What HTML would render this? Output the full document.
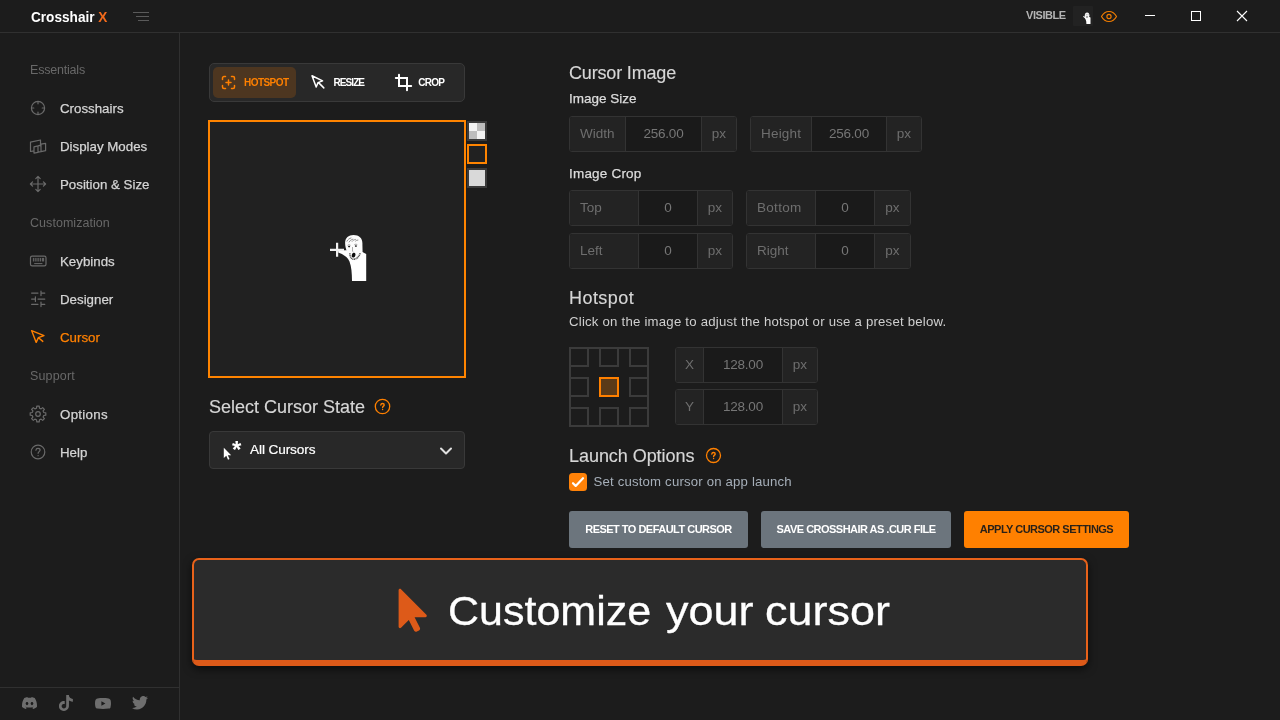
<!DOCTYPE html>
<html lang="en">
<head>
<meta charset="utf-8">
<title>Crosshair X</title>
<style>
*{box-sizing:border-box;margin:0;padding:0}
html,body{width:1280px;height:720px;overflow:hidden;background:#1c1c1c}
body{font-family:"Liberation Sans",sans-serif;color:#d0d0d0;position:relative}
#root{position:absolute;left:0;top:0;width:1280px;height:720px;will-change:transform}
.abs{position:absolute}
.t{position:absolute;white-space:nowrap;line-height:1}
/* title bar */
#titlebar{left:0;top:0;width:1280px;height:33px;border-bottom:1px solid #303030}
#brand{left:31px;top:8.500px;font-size:15.500px;font-weight:700;color:#fff;transform-origin:0 50%;transform:scaleX(.878)}
#brand b{color:#f26a1b}
.hb{position:absolute;height:1px;background:#5a5a5a}
/* sidebar */
#sidebar{left:0;top:33px;width:180px;height:687px;border-right:1px solid #303030}
.sec{left:30px;font-size:12.500px;color:#686868;letter-spacing:-0.200px}
.nav{left:60px;font-size:13.300px;color:#d4d4d4;-webkit-text-stroke:0.250px #d4d4d4;margin-top:1px}
.nav.on{color:#ff8000;-webkit-text-stroke-color:#ff8000}
.ico{position:absolute;left:29px;width:18px;height:18px;fill:none;stroke:#6a6a6a;stroke-width:1.200;stroke-linecap:round;stroke-linejoin:round}
#social{left:0;top:687px;width:179px;height:33px;border-top:1px solid #303030}
/* tabs */
#tabs{left:209px;top:63px;width:256px;height:39px;background:#282828;border:1px solid #393939;border-radius:5px}
#tabon{left:213px;top:67px;width:83px;height:31px;background:#4d3620;border-radius:5px}
.tab{font-size:10px;font-weight:700;color:#fff;letter-spacing:-0.3px}
/* preview */
#preview{left:208px;top:120px;width:258px;height:258px;border:2px solid #ff8400;background:#212121}
.sw{position:absolute;left:468px;width:19px;height:19px;border:1px solid #3a3a3a}
/* headings */
.h1{font-size:19px;color:#d6d6d6;-webkit-text-stroke:0.150px #d6d6d6}
.h2{font-size:13.500px;color:#dcdcdc;-webkit-text-stroke:0.250px #dcdcdc}
/* input groups */
.ig{position:absolute;height:36px;border:1px solid #333;border-radius:3px;background:#1a1a1a;display:flex;overflow:hidden}
.ig span{display:block;height:100%;line-height:34px;font-size:13.500px;color:#6e6e6e;white-space:nowrap}
.ig .l{background:#232323;border-right:1px solid #333;padding-left:10px}
.ig .v{text-align:center;color:#767676}
.ig .u{background:#232323;border-left:1px solid #333;text-align:center}
/* buttons */
.btn{position:absolute;top:511px;height:37px;border-radius:3px;font-size:11px;font-weight:700;line-height:37px;text-align:center;color:#fff;background:#6c757d;white-space:nowrap;letter-spacing:-0.520px}
/* banner */
#banner{left:192px;top:558px;width:896px;height:108px;background:#2b2b2b;border:2px solid #e8621a;border-bottom:6px solid #dd5a19;border-radius:7px;box-shadow:0 3px 8px rgba(0,0,0,.6)}
.bt{top:590.500px;font-size:41px;color:#fff;transform-origin:0 50%;-webkit-text-stroke:0.300px #fff}
#grid i{position:absolute;display:block;width:20px;height:20px;border:2px solid #3b3b3b}
#grid i.c{border:2px solid #ff8000;background:#5a3a18}
</style>
</head>
<body>
<div id="root">
<!-- TITLE BAR -->
<div id="titlebar" class="abs"></div>
<div id="brand" class="t">Crosshair <b>X</b></div>
<div class="hb" style="left:133px;top:12px;width:16px"></div>
<div class="hb" style="left:136px;top:16px;width:13px"></div>
<div class="hb" style="left:138px;top:20px;width:11px"></div>

<!-- top right -->
<div class="t" style="left:1026px;top:10px;font-size:11px;font-weight:700;color:#b4b4b4;letter-spacing:-0.450px">VISIBLE</div>
<div class="abs" style="left:1073px;top:6px;width:20px;height:20px;background:#222;border-radius:1px"></div>
<svg class="abs" style="left:1073px;top:6px" width="20" height="20" viewBox="0 0 20 20"><path d="M10 10.200l2.400.4 4 .4 1.100.6V18H13.400c0-3.400-.6-5.600-3.400-7.200z" fill="#fff"/><ellipse cx="14.100" cy="9.300" rx="2.300" ry="2.900" fill="#f6f6f6"/><ellipse cx="14" cy="10.900" rx=".7" ry=".9" fill="#555"/><path d="M12.900 8.700h.8M14.600 8.600h.8" stroke="#777" stroke-width=".6"/></svg>
<svg class="abs" style="left:1100px;top:8.500px" width="18" height="15" viewBox="0 0 18 15" fill="none" stroke="#f07c00" stroke-width="1.150" stroke-linejoin="round"><path d="M1.500 7.500c1.800-3.300 4.400-5 7.500-5s5.700 1.700 7.500 5c-1.800 3.300-4.400 5-7.500 5s-5.700-1.700-7.500-5z"/><circle cx="9" cy="7.500" r="2.100"/></svg>
<div class="abs" style="left:1145px;top:15px;width:10px;height:1px;background:#fff"></div>
<div class="abs" style="left:1191px;top:11px;width:10px;height:10px;border:1px solid #fff"></div>
<svg class="abs" style="left:1236px;top:10px" width="12" height="12" viewBox="0 0 12 12" stroke="#fff" stroke-width="1.100"><path d="M1 1l10 10M11 1 1 11"/></svg>

<!-- SIDEBAR -->
<div id="sidebar" class="abs"></div>
<div class="t sec" style="top:64px">Essentials</div>
<div class="t nav" style="top:101px">Crosshairs</div>
<div class="t nav" style="top:139px">Display Modes</div>
<div class="t nav" style="top:177px">Position &amp; Size</div>
<div class="t sec" style="top:217px;letter-spacing:0.050px">Customization</div>
<div class="t nav" style="top:254px">Keybinds</div>
<div class="t nav" style="top:292px">Designer</div>
<div class="t nav on" style="top:330px">Cursor</div>
<div class="t sec" style="top:370px;letter-spacing:0.150px">Support</div>
<div class="t nav" style="top:407px;letter-spacing:0.300px">Options</div>
<div class="t nav" style="top:445px">Help</div>
<!-- sidebar icons -->
<svg class="ico" style="top:99px" viewBox="0 0 18 18"><circle cx="9" cy="9" r="6.6"/><path d="M9 2.6v2.2M9 13.2v2.2M2.6 9h2.2M13.2 9h2.2"/></svg>
<svg class="ico" style="top:137px" viewBox="0 0 18 18"><path d="M1.5 5.2 11.5 3v6M1.5 5.2v9.3l3.5-.6M5 9.8l4-.9v6.4l-4 .8zM9 8.9l3-.7M9 15.2l3-.6M12 7.2l4.6-.9v7.4l-4.6.9z"/></svg>
<svg class="ico" style="top:175px" viewBox="0 0 18 18"><path d="M9 1.4v15.2M1.4 9h15.2M6.8 3.6 9 1.4l2.2 2.2M6.8 14.4 9 16.6l2.2-2.2M3.6 6.8 1.4 9l2.2 2.2M14.4 6.8 16.6 9l-2.200 2.2"/></svg>
<svg class="ico" style="top:252px" viewBox="0 0 18 18"><rect x="1.500" y="4.200" width="15.500" height="9.600" rx="1.600"/><path d="M4.400 6.300v2.800M6.200 6.300v2.800M8 6.300v2.800M9.800 6.300v2.800M11.600 6.300v2.800M13.400 6.300v2.800M14.600 6.300v2.800M5.600 11.600h7.400" stroke-width="1"/></svg>
<svg class="ico" style="top:290px" viewBox="0 0 18 18"><path d="M2.600 3.100h6.400M12 1v4.600M12 3.100h3.800M2.600 9.100h3.800M6.400 6.800v4.600M9 9.100h6.800M2.600 14.300h6.400M12 12v4.600M12 14.300h3.800"/></svg>
<svg class="ico" style="top:328px;stroke:#ff8000;stroke-width:1.400" viewBox="0 0 18 18"><path d="M2.600 2.600 7.200 14.400 9.400 9.600 15 7.600zM9.800 10l4 3.400"/></svg>
<svg class="ico" style="top:405px" viewBox="0 0 18 18"><circle cx="9" cy="9" r="2.300"/><path d="M7.5 3.2 7.8 1.2 10.2 1.2 10.5 3.2 12.1 3.9 13.7 2.6 15.4 4.3 14.1 5.9 14.8 7.5 16.8 7.8 16.8 10.2 14.8 10.5 14.1 12.1 15.4 13.7 13.7 15.4 12.1 14.1 10.5 14.8 10.2 16.8 7.8 16.8 7.5 14.8 5.9 14.1 4.3 15.4 2.6 13.7 3.9 12.1 3.2 10.5 1.2 10.2 1.2 7.8 3.2 7.5 3.9 5.9 2.6 4.3 4.3 2.6 5.9 3.9z"/></svg>
<svg class="ico" style="top:443px" viewBox="0 0 18 18"><circle cx="9" cy="9" r="6.800"/><path d="M6.900 7.200c.1-1.200 1-1.900 2.100-1.900 1.200 0 2.100.8 2.100 1.800 0 1.500-2 1.600-2 3.200M9.100 12.500v.2"/></svg>
<div id="social" class="abs"></div>
<svg class="abs" style="left:21.500px;top:697px" width="15" height="12" viewBox="0 -2.800 24 18.400" fill="#6e6e6e" preserveAspectRatio="none"><path transform="translate(0 -5.600)" d="M20.317 4.3698a19.7913 19.7913 0 00-4.8851-1.5152.0741.0741 0 00-.0785.0371c-.211.3753-.4447.8648-.6083 1.2495-1.8447-.2762-3.68-.2762-5.4868 0-.1636-.3933-.4058-.8742-.6177-1.2495a.077.077 0 00-.0785-.037 19.7363 19.7363 0 00-4.8852 1.515.0699.0699 0 00-.0321.0277C.5334 9.0458-.319 13.5799.0992 18.0578a.0824.0824 0 00.0312.0561c2.0528 1.5076 4.0413 2.4228 5.9929 3.0294a.0777.0777 0 00.0842-.0276c.4616-.6304.8731-1.2952 1.226-1.9942a.076.076 0 00-.0416-.1057c-.6528-.2476-1.2743-.5495-1.8722-.8923a.077.077 0 01-.0076-.1277c.1258-.0943.2517-.1923.3718-.2914a.0743.0743 0 01.0776-.0105c3.9278 1.7933 8.18 1.7933 12.0614 0a.0739.0739 0 01.0785.0095c.1202.099.246.1981.3728.2924a.077.077 0 01-.0066.1276 12.2986 12.2986 0 01-1.873.8914.0766.0766 0 00-.0407.1067c.3604.698.7719 1.3628 1.225 1.9932a.076.076 0 00.0842.0286c1.961-.6067 3.9495-1.5219 6.0023-3.0294a.077.077 0 00.0313-.0552c.5004-5.177-.8382-9.6739-3.5485-13.6604a.061.061 0 00-.0312-.0286zM8.02 15.3312c-1.1825 0-2.1569-1.0857-2.1569-2.419 0-1.3332.9555-2.4189 2.157-2.4189 1.2108 0 2.1757 1.0952 2.1568 2.419 0 1.3332-.9555 2.4189-2.1569 2.4189zm7.9748 0c-1.1825 0-2.1569-1.0857-2.1569-2.419 0-1.3332.9554-2.4189 2.1569-2.4189 1.2108 0 2.1757 1.0952 2.1568 2.419 0 1.3332-.946 2.4189-2.1568 2.4189Z"/></svg>
<svg class="abs" style="left:59px;top:695px" width="14" height="16" viewBox="1.800 0 20.800 24" fill="#6e6e6e" preserveAspectRatio="none"><path d="M12.525.02c1.31-.02 2.61-.01 3.91-.02.08 1.530.63 3.090 1.750 4.170 1.120 1.110 2.700 1.620 4.240 1.790v4.030c-1.440-.05-2.890-.35-4.200-.97-.57-.26-1.100-.59-1.620-.93-.01 2.920.01 5.840-.02 8.750-.08 1.400-.54 2.790-1.350 3.940-1.310 1.920-3.580 3.170-5.910 3.210-1.430.08-2.860-.31-4.080-1.030-2.020-1.190-3.440-3.370-3.650-5.710-.02-.5-.03-1-.01-1.490.18-1.900 1.120-3.720 2.580-4.960 1.660-1.440 3.980-2.130 6.150-1.720.02 1.480-.04 2.960-.04 4.440-.99-.32-2.150-.23-3.020.37-.63.41-1.110 1.040-1.360 1.750-.21.51-.15 1.070-.14 1.610.24 1.640 1.820 3.020 3.500 2.870 1.120-.01 2.190-.66 2.770-1.610.19-.33.4-.67.41-1.060.1-1.790.06-3.570.07-5.360.01-4.030-.01-8.050.02-12.070z"/></svg>
<svg class="abs" style="left:95px;top:697.500px" width="16" height="11" viewBox="0 0 16 11" fill="#6e6e6e"><path fill-rule="evenodd" d="M2.400.4C4.300.1 6.100 0 8 0s3.700.1 5.600.4c1 .15 1.800.9 2 1.900.27 1.060.4 2.130.4 3.200s-.13 2.140-.4 3.200c-.2 1-.1 1.750-2 1.900-1.900.3-3.700.4-5.600.4s-3.700-.1-5.600-.4c-1-.15-1.800-.9-2-1.900C.13 7.640 0 6.570 0 5.500s.13-2.140.4-3.200c.2-1 1-1.750 2-1.900zM6.400 3.200v4.600l4-2.300z"/></svg>
<svg class="abs" style="left:132px;top:696px" width="16" height="13.500" viewBox="0 2.200 24 19.600" fill="#6e6e6e" preserveAspectRatio="none"><path d="M23.953 4.57a10 10 0 01-2.825.775 4.958 4.958 0 002.163-2.723c-.951.555-2.005.959-3.127 1.184a4.920 4.920 0 00-8.384 4.482C7.690 8.095 4.067 6.130 1.640 3.162a4.822 4.822 0 00-.666 2.475c0 1.710.870 3.213 2.188 4.096a4.904 4.904 0 01-2.228-.616v.06a4.923 4.923 0 003.946 4.827 4.996 4.996 0 01-2.212.085 4.936 4.936 0 004.604 3.417 9.867 9.867 0 01-6.102 2.105c-.390 0-.779-.023-1.170-.067a13.995 13.995 0 007.557 2.209c9.053 0 13.998-7.496 13.998-13.985 0-.21 0-.42-.015-.63A9.935 9.935 0 0024 4.590z"/></svg>

<!-- MAIN -->
<!-- tabs -->
<div id="tabs" class="abs"></div>
<div id="tabon" class="abs"></div>
<svg class="abs" style="left:221px;top:75px" width="15" height="15" viewBox="0 0 15 15" fill="none" stroke="#ff8000" stroke-width="1.500" stroke-linecap="round" stroke-linejoin="round"><path d="M1.500 4.500v-1.500a1.500 1.500 0 0 1 1.500-1.500h1.500M10.500 1.500h1.500a1.500 1.500 0 0 1 1.500 1.500v1.500M13.500 10.500v1.500a1.500 1.500 0 0 1-1.500 1.500h-1.500M4.500 13.500h-1.500a1.500 1.500 0 0 1-1.500-1.500v-1.500M7.500 5v5M5 7.500h5"/></svg>
<div class="t tab" style="left:244px;top:78px;color:#ff8000;letter-spacing:-0.550px">HOTSPOT</div>
<svg class="abs" style="left:310px;top:74px" width="16" height="16" viewBox="0 0 16 16" fill="none" stroke="#fff" stroke-width="1.500" stroke-linejoin="round" stroke-linecap="round"><path d="M2 1.800 6.200 13l1.800-4.400 4.600-1.700zM8.800 8.900l5 5"/></svg>
<div class="t tab" style="left:333.400px;top:78px;letter-spacing:-0.900px">RESIZE</div>
<svg class="abs" style="left:394px;top:73px" width="19" height="19" viewBox="0 0 19 19" fill="none" stroke="#fff" stroke-width="2" stroke-linecap="round"><path d="M5 1.800v11.200h12.200M1.800 5h11.200v12.200"/></svg>
<div class="t tab" style="left:418.300px;top:78px;letter-spacing:-0.720px">CROP</div>

<!-- preview -->
<div id="preview" class="abs"></div>
<svg class="abs" style="left:325px;top:230px" width="50" height="56" viewBox="325 230 50 56">
<path d="M338.200 250.400 346 250.300 362.400 252 366.200 254V281H352C351.900 273 351.500 267 349.500 261.500 347.500 257 343.500 254.400 338.200 252.600Z" fill="#fff"/>
<path d="M345.100 243C345 238 348.500 234.900 353.500 234.900 359 234.900 362.400 238 362.400 243 362.400 247 362.700 250 362.500 252.500 361 257 358 260.600 355 260.800 351 260.600 348 256 346.800 251.500 345.800 248.500 345.200 246 345.100 243Z" fill="#fcfcfc"/>
<path d="M346.800 241.500c1-2 2.600-3.200 4.600-3.600M349 242.300c1-1.800 2.400-2.800 4.200-3.200M352 241.600c.9-1.300 2.200-2 3.800-2.200M355.300 241.300c.8-.9 1.800-1.300 3-1.300" stroke="#858585" stroke-width=".9" fill="none"/>
<path d="M347.600 245.300c.9-.6 2-.6 2.900 0M354.300 244.700c.9-.6 2.100-.6 3 0" stroke="#777" stroke-width=".7" fill="none"/>
<ellipse cx="349.100" cy="246.600" rx="1.100" ry=".8" fill="#222"/><ellipse cx="355.900" cy="246.100" rx="1.100" ry=".8" fill="#222"/>
<path d="M352.500 247v4.300l.9.500" stroke="#8a8a8a" stroke-width=".7" fill="none"/>
<path d="M349.900 253.300c-.2 3 1.200 5.600 3.600 6 2.600.2 5.600-2.600 6.800-6.400" stroke="#555" stroke-width="1.600" fill="none" stroke-dasharray="1.100 .5"/>
<ellipse cx="353.600" cy="255.100" rx="1.800" ry="2.400" fill="#0c0c0c" transform="rotate(14 353.600 255.100)"/>
<path d="M330 249.800h14M337.100 242.800v14" stroke="#f0f0f0" stroke-width="2.200"/>
</svg>
<div class="abs" style="left:467px;top:121px;width:20px;height:20px;border:2px solid #3a3a3a;background:#f2f2f2"><div class="abs" style="left:8px;top:0;width:8px;height:8px;background:#bdbdbd"></div><div class="abs" style="left:0;top:8px;width:8px;height:8px;background:#bdbdbd"></div></div>
<div class="abs" style="left:467px;top:144px;width:20px;height:20px;border:2px solid #ff8400;background:#212121"></div>
<div class="abs" style="left:467px;top:168px;width:20px;height:20px;border:2px solid #3a3a3a;background:#d9d9d9"></div>

<!-- select cursor state -->
<div class="t h1" style="left:209px;top:397.500px;font-size:18px;letter-spacing:0px">Select Cursor State</div>
<svg class="abs" style="left:374px;top:398px" width="17" height="17" viewBox="0 0 17 17" fill="none" stroke="#ff8000" stroke-width="1.300" stroke-linecap="round"><circle cx="8.500" cy="8.500" r="7.200"/><path d="M6.800 7c.1-1 .8-1.500 1.700-1.500 1 0 1.700.6 1.700 1.400 0 1.200-1.600 1.300-1.600 2.600M8.600 11.500v.1" stroke-width="1.400"/></svg>
<div class="abs" style="left:209px;top:431px;width:256px;height:38px;background:#282828;border:1px solid #393939;border-radius:4px"></div>
<svg class="abs" style="left:223px;top:447px" width="9" height="14" viewBox="0 0 9 14"><path d="M.8.800v10.200l2.500-2.300 1.700 4 1.500-.7-1.700-3.800h3.400z" fill="#fff"/></svg>
<div class="t" style="left:232px;top:438px;font-size:24px;font-weight:700;color:#fff">*</div>
<div class="t" style="left:250px;top:442.500px;font-size:13.600px;color:#fff;letter-spacing:-0.100px;-webkit-text-stroke:0.200px #fff">All Cursors</div>
<svg class="abs" style="left:439px;top:445.500px" width="14" height="10" viewBox="0 0 14 10" fill="none" stroke="#e0e0e0" stroke-width="2" stroke-linecap="round" stroke-linejoin="round"><path d="M2 2.500l5 5 5-5"/></svg>

<!-- right column -->
<div class="t h1" style="left:569px;top:64px;font-size:18px;letter-spacing:-0.170px">Cursor Image</div>
<div class="t h2" style="left:569px;top:92px">Image Size</div>
<div class="ig" style="left:569px;top:116px;width:168px"><span class="l" style="width:56px">Width</span><span class="v" style="width:75px;letter-spacing:-0.25px">256.00</span><span class="u" style="width:35px">px</span></div>
<div class="ig" style="left:750px;top:116px;width:172px"><span class="l" style="width:61px;letter-spacing:0.2px">Height</span><span class="v" style="width:74px;letter-spacing:-0.25px">256.00</span><span class="u" style="width:35px">px</span></div>
<div class="t h2" style="left:569px;top:167px;letter-spacing:0.200px">Image Crop</div>
<div class="ig" style="left:569px;top:190px;width:164px"><span class="l" style="width:69px">Top</span><span class="v" style="width:58px">0</span><span class="u" style="width:35px">px</span></div>
<div class="ig" style="left:746px;top:190px;width:165px"><span class="l" style="width:69px;letter-spacing:0.3px">Bottom</span><span class="v" style="width:58px">0</span><span class="u" style="width:36px">px</span></div>
<div class="ig" style="left:569px;top:233px;width:164px"><span class="l" style="width:69px">Left</span><span class="v" style="width:58px">0</span><span class="u" style="width:35px">px</span></div>
<div class="ig" style="left:746px;top:233px;width:165px"><span class="l" style="width:69px">Right</span><span class="v" style="width:58px">0</span><span class="u" style="width:36px">px</span></div>
<div class="t h1" style="left:569px;top:289px;font-size:18px;letter-spacing:0.450px">Hotspot</div>
<div class="t" style="left:569px;top:315px;font-size:13.200px;letter-spacing:0.220px;color:#cfcfcf">Click on the image to adjust the hotspot or use a preset below.</div>
<!-- hotspot grid -->
<div id="grid" class="abs" style="left:569px;top:347px;width:80px;height:80px;border:2px solid #3b3b3b">
<i style="left:-2px;top:-2px"></i><i style="left:28px;top:-2px"></i><i style="left:58px;top:-2px"></i>
<i style="left:-2px;top:28px"></i><i class="c" style="left:28px;top:28px"></i><i style="left:58px;top:28px"></i>
<i style="left:-2px;top:58px"></i><i style="left:28px;top:58px"></i><i style="left:58px;top:58px"></i>
</div>
<div class="ig" style="left:675px;top:347px;width:143px"><span class="l" style="width:28px;padding-left:0;text-align:center">X</span><span class="v" style="width:78px;letter-spacing:-0.25px">128.00</span><span class="u" style="width:35px">px</span></div>
<div class="ig" style="left:675px;top:389px;width:143px"><span class="l" style="width:28px;padding-left:0;text-align:center">Y</span><span class="v" style="width:78px;letter-spacing:-0.25px">128.00</span><span class="u" style="width:35px">px</span></div>
<div class="t h1" style="left:569px;top:447px;font-size:18px;letter-spacing:-0.050px">Launch Options</div>
<svg class="abs" style="left:704.500px;top:447px" width="17" height="17" viewBox="0 0 17 17" fill="none" stroke="#ff8000" stroke-width="1.300" stroke-linecap="round"><circle cx="8.500" cy="8.500" r="7"/><path d="M6.800 7c.1-1 .8-1.500 1.700-1.500 1 0 1.700.6 1.700 1.400 0 1.200-1.600 1.300-1.600 2.600M8.600 11.500v.1" stroke-width="1.400"/></svg>
<div class="abs" style="left:569px;top:473px;width:18px;height:18px;border-radius:3.500px;background:#ff8208"></div>
<svg class="abs" style="left:569px;top:473px" width="18" height="18" viewBox="0 0 18 18" fill="none" stroke="#fff" stroke-width="2.200" stroke-linecap="round" stroke-linejoin="round"><path d="M4 10.200l2.700 2.700 7.300-7.700"/></svg>
<div class="t" style="left:593.500px;top:475px;font-size:13.200px;letter-spacing:0.180px;color:#a6afb9">Set custom cursor on app launch</div>

<div class="btn" style="left:569px;width:179px">RESET TO DEFAULT CURSOR</div>
<div class="btn" style="left:761px;width:190px">SAVE CROSSHAIR AS .CUR FILE</div>
<div class="btn" style="left:964px;width:165px;background:#ff8000;color:#2a2118;font-weight:700">APPLY CURSOR SETTINGS</div>

<!-- banner -->
<div id="banner" class="abs"></div>
<svg class="abs" style="left:396px;top:587px" width="34" height="46" viewBox="0 0 34 46"><path d="M2.600 3.200v36.500c0 1.300 1.500 1.900 2.400 1l7.800-7.800 5.400 10.800c.5 1 1.700 1.400 2.700.9l2.100-1.100c1-.5 1.400-1.700.9-2.700l-5.300-10.600h10.800c1.300 0 1.900-1.500 1-2.400l-25.400-25.600c-.9-.9-2.400-.3-2.400 1z" fill="#dd5a19"/></svg>
<div class="t bt" style="left:448.300px;transform:scaleX(1.049)">Customize</div>
<div class="t bt" style="left:665.500px;transform:scaleX(1.097)">your</div>
<div class="t bt" style="left:765.200px;transform:scaleX(1.096)">cursor</div>
</div>
</body>
</html>
